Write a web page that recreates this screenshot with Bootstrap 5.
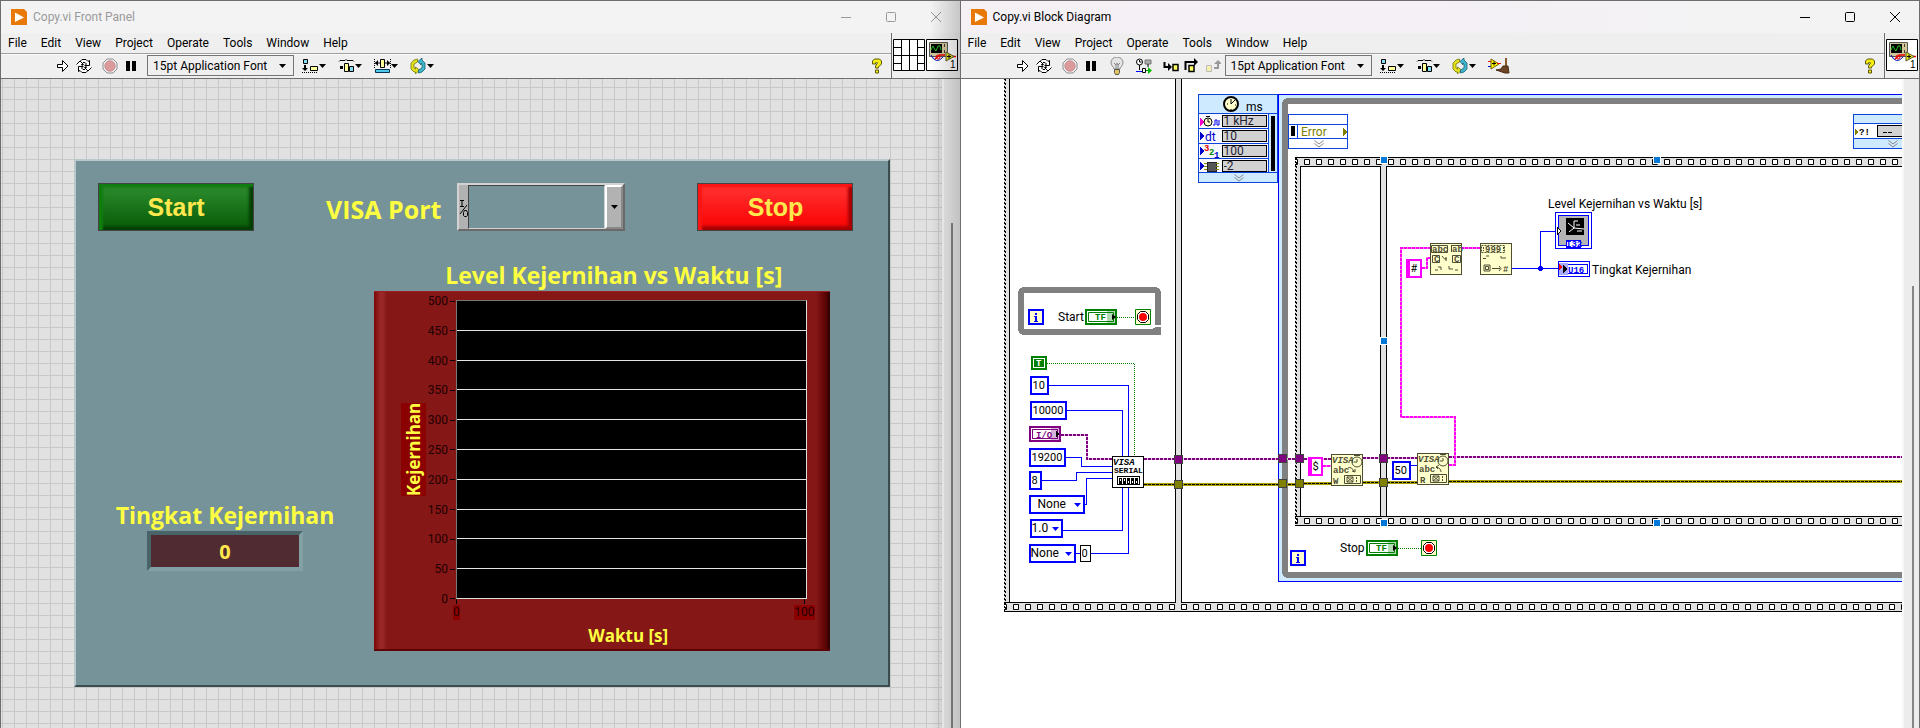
<!DOCTYPE html>
<html lang="en">
<head>
<meta charset="utf-8">
<meta name="viewport" content="width=device-width, initial-scale=1">
<title>Copy.vi</title>
<link href="https://cdn.jsdelivr.net/npm/bootstrap@5.3.0/dist/css/bootstrap.min.css" rel="stylesheet">
<style>
body { font-family: Roboto, "Open Sans", sans-serif; font-size: 12px; line-height: 16px; color: #000; background: #efefef; }
.vi-window { border-top: 1px solid #6e6e6e; border-left: 1px solid #6e6e6e; background: #efefef; flex: 1 1 0; min-width: 0; }
.vi-window.front { border-right: 1px solid #6e6e6e; }
.title-bar { height: 32px; background: #f3f3f3; padding-left: 10px; padding-right: 16px; gap: 6px; }
.front .title-bar { background: linear-gradient(90deg, #f5f0f4, #f4f0f6 50%, #f3f3f3 85%); }
.back .title-bar { color: #9a9a9a; }
.caption { width: 16px; height: 16px; padding: 0; border: 0; background: none; color: inherit; }
.captions { gap: 29px; }
.menu-bar { height: 20px; padding-left: 7px; gap: 14px; }
.menu-bar a { color: #000; text-decoration: none; }
.tool-bar { height: 26px; padding-left: 54px; padding-bottom: 1px; border-top: 1px solid #a0a0a0; border-bottom: 1px solid #6e6e6e; box-shadow: inset 0 1px #fafafa; }
.tool { border: 0; padding: 0; background: none; display: flex; height: 20px; align-items: center; }
.tool svg { display: block; }
.g5 { gap: 5px; } .g12 { gap: 12px; } .g10 { gap: 10px; }
.font-box { width: 147px; height: 21px; border: 1px solid #757575; border-radius: 0; background: #efefef url("data:image/svg+xml,%3Csvg xmlns='http://www.w3.org/2000/svg' width='7' height='4'%3E%3Cpath d='M0 0h7L3.500 4z'/%3E%3C/svg%3E") no-repeat right 7px center; appearance: none; padding: 0 18px 0 5px; line-height: 18px; color: #000; }
.icon-pane { border-left: 1px solid #6e6e6e; padding: 6px 1px 0 1px; gap: 1px; height: 46px; border-bottom: 1px solid #6e6e6e; }
.back .icon-pane { padding-right: 2px; }
.bars { min-width: 0; }

.panel-canvas { flex: 1; min-width: 0; padding: 80px 52px 40px 73px; background-color: #e1e1e1; background-image: linear-gradient(90deg, #c8c8c8 1px, transparent 1px), linear-gradient(#c8c8c8 1px, transparent 1px); background-size: 12px 12px; background-position: 1px 8px; }
.scroll-track { width: 17px; background: #ececec; padding-left: 8px; border-left: 2px solid #f8f8f8; }
.back .scroll-track { width: 18px; padding-left: 7px; padding-top: 144px; }
.front .scroll-track { padding-top: 207px; }
.scroll-thumb { width: 2px; background: #858585; }
.shade { width: 30px; background: linear-gradient(90deg, transparent, rgba(0,0,0,.18)); pointer-events: none; }
.vi-panel { background: #759398; border: 2px solid; border-color: #b9c8cb #3b4c4f #3b4c4f #b9c8cb; padding: 22px 0 34px; }
.control-row { padding: 0 34px 0 22px; }
.yellow { color: #ffff41; font-family: "Open Sans", "Noto Sans", sans-serif; font-weight: 700; }
.big-btn { width: 156px; height: 48px; border: 1px solid #444; border-radius: 0; font: bold 25px "Liberation Sans", sans-serif; color: #ffe84d; padding: 0; }
.start-btn { background: linear-gradient(#278427 20%, #0d640d 80%); box-shadow: inset 4px 3px 2px #0f7d0f, inset -4px -4px 3px #043f04; }
.stop-btn { background: linear-gradient(#ff2a2a 20%, #fb0a0a 80%); box-shadow: inset 4px 3px 2px #fa1515, inset -4px -4px 3px #a80000; }
.h-label { font-size: 23px; line-height: 32px; white-space: nowrap; }
.visa-label { font-size: 25px; padding-top: 4px; }
.visa { width: 168px; height: 48px; background: #b2b2b2; border: 2px solid; border-color: #d2d2d2 #6a6a6a #6a6a6a #d2d2d2; }
.visa select { appearance: none; border: 1px solid; border-color: #444 #d2d2d2 #d2d2d2 #444; background: #759398; border-radius: 0; flex: 1; min-width: 0; }
.visa-arrow { width: 18px; border: 2px solid; border-color: #fff #888 #888 #fff; }
.read-col { width: 298px; padding-top: 268px; }
.number-box { width: 156px; height: 40px; border: 4px solid; border-color: #486468 #83a0a5 #83a0a5 #486468; background: #502b31; color: #ffe84d; font-family: "Open Sans", "Noto Sans", sans-serif; font-weight: 700; font-size: 20px; text-align: center; padding: 0; border-radius: 0; outline: 0; }
.chart-col { flex: 1; padding-right: 58px; padding-top: 28px; }
.graph { height: 360px; padding: 8px 23px 0 27px; background: linear-gradient(90deg, #7c0505, #992727 6px, #992727 9px, #861717 13px, #861717 calc(100% - 14px), #5f0404 calc(100% - 5px), #2d0000); border-top: 1px solid #9b2020; border-bottom: 2px solid #5d0303; }
.y-title { background: #8b0000; writing-mode: vertical-rl; transform: rotate(180deg); font-size: 17px; line-height: 25px; height: 93px; text-align: center; }
.y-ticks { margin: -7px 1px -8px 0; width: 29px; }
.y-ticks div { display: flex; align-items: center; justify-content: flex-end; gap: 2px; line-height: 16px; color: #1d0000; }
.y-ticks div::after { content: ""; width: 5px; height: 1px; background: #000; }
.plot { flex: 1; height: 299px; background: #000; border: 1px solid; border-color: #777 #ddd #ddd #777; }
.plot div { flex: 1; border-bottom: 1px solid #e5e5e5; }
.plot div:last-child { border: 0; }
.x-ticks { margin: 0 -8px 0 52px; }
.x-ticks span { background: #8b0000; margin-top: 6px; line-height: 15px; position: relative; color: #1d0000; }
.x-ticks span::before { content: ""; position: absolute; left: 50%; top: -6px; height: 5px; width: 1px; background: #000; }
.x-title { font-size: 17px; line-height: 24px; margin: 4px 0 0 49px; text-align: center; }

.diagram { flex: 1; min-width: 0; background: #fff; }
.diagram > svg { width: 100%; height: 100%; position: absolute; left: 0; top: 0; }
.konst { position: absolute; height: 19px; border: 2px solid #00f; border-radius: 0; padding: 0 0 0 1px; font-size: 11px; line-height: 15px; background-color: #fff; color: #000; appearance: none; outline: 0; overflow: hidden; }
select.konst { font-size: 12px; background: #fff url("data:image/svg+xml,%3Csvg xmlns='http://www.w3.org/2000/svg' width='7' height='4'%3E%3Cpath fill='%2300f' d='M0 0h7L3.500 4z'/%3E%3C/svg%3E") no-repeat right 2px center; }
.str { border-color: #f0f; border-left-width: 4px; }
.timing { position: absolute; width: 45px; height: 12px; left: 261px; border: 1px solid #000; background: #d2d2d2; border-radius: 0; padding: 0 0 0 1px; line-height: 10px; color: #223; outline: 0; }
#k10 { left: 69px; top: 297px; width: 19px; }
#k10000 { left: 69px; top: 322px; width: 37px; }
#kbaud { left: 68px; top: 369px; width: 37px; }
#kbits { left: 68px; top: 392px; width: 13px; }
#kparity { left: 68px; top: 416px; width: 56px; padding-left: 7px; }
#kstop { left: 69px; top: 440px; width: 33px; padding-left: 0; }
#kflow { left: 68px; top: 465px; width: 47px; padding-left: 0; }
#kzero { left: 119px; top: 466px; width: 11px; height: 17px; border: 1px solid #000; }
#khash { left: 445px; top: 180px; width: 16px; }
#kdollar { left: 347px; top: 378px; width: 15px; }
#k50 { left: 431px; top: 382px; width: 19px; }
#t1 { top: 36px; } #t2 { top: 51px; } #t3 { top: 66px; } #t4 { top: 81px; }
.pix { font-family: "Liberation Mono", monospace; font-weight: 700; font-size: 9px; }
.nodetext { font-size: 12px; }
</style>
</head>
<body>
<svg width="0" height="0" class="position-absolute" aria-hidden="true">
  <defs>
    <symbol id="logo" viewBox="0 0 16 16"><path d="M0 0h13l3 3v13H0z" fill="#e87908"/><path d="M4 3.500 13 8.500 4 13z" fill="#fff"/></symbol>
    <symbol id="run" viewBox="0 0 16 16"><path d="M2.500 6.500h5v-4l5.500 5.500-5.500 5.500v-4h-5z" fill="#fff" stroke="#000"/></symbol>
    <symbol id="loop" viewBox="0 0 16 16"><path d="M.5 6.500 4 3l3.500 3.500H5.500L7 9M4 3.500 6 1.500h4l2 2 1.500-1v5H9L10.500 6 9 4.500H7M15.500 9.500 12 13 8.500 9.500h2L9 7M12 12.500l-2 2H6l-2-2-1.500 1v-5H7L5.500 10 7 11.500h2" fill="#fff" stroke="#000"/></symbol>
    <symbol id="abort" viewBox="0 0 16 16"><path d="M5 1h6l4 4v6l-4 4H5l-4-4V5z" fill="#eee" stroke="#909090"/><circle cx="8" cy="8" r="5.200" fill="#dc9a9a" stroke="#c89090"/></symbol>
    <symbol id="pause" viewBox="0 0 16 16"><path d="M3 3h4v10H3zM9 3h4v10H9z"/></symbol>
    <symbol id="drop" viewBox="0 0 7 4"><path d="M0 0h7L3.500 4z"/></symbol>
    <symbol id="align" viewBox="0 0 24 16"><path d="M1.500 1.500h4v4h-4z" fill="#7fe0f5" stroke="#000"/><path d="M8.500 8.500h7v4h-7z" fill="#ffff9a" stroke="#000"/><path d="M2 7h2v3h2l-3 3-3-3h2z"/><path d="M0 14.500h16" stroke="#000" stroke-dasharray="1 1"/><path d="M17 6h7l-3.500 4z"/></symbol>
    <symbol id="dist" viewBox="0 0 24 16"><path d="M1 3.500 2 2.500h5l1-1 1 1h6l1 1" fill="none" stroke="#000"/><path d="M6.500 5.500h4v8h-4z" fill="#ffff9a" stroke="#000"/><path d="M11.500 8.500h4v5h-4z" fill="#7fe0f5" stroke="#000"/><path d="M2 8h3v3H2z"/><path d="M17 6h7l-3.500 4z"/></symbol>
    <symbol id="size" viewBox="0 0 24 16"><path d="M1.500 11.500h14v3h-14z" fill="#4cc8e8" stroke="#035"/><path d="M6.500 1.500h4v8h-4z" fill="#ffff9a" stroke="#000"/><path d="M1 5h5M11 5h5" stroke="#000"/><path d="m1 5 3-3v6zM16 5l-3-3v6z"/><path d="M.5 1v9M16.500 1v9" stroke="#000" stroke-dasharray="1 1"/><path d="M17 6h7l-3.500 4z"/></symbol>
    <symbol id="order" viewBox="0 0 24 16"><path d="M7.500 1 4 2 1 5v6l3 3h1.500v2l4-4-4-3v2L4 10V6l3.500-2z" fill="#e2e21c" stroke="#77770a" stroke-width=".8"/><path d="m8 3.500 4-3.500v2l3 3v6l-3 3-3.500 1v-3l3.500-2V6l-1-1v2z" fill="#3fb6cc" stroke="#125f74" stroke-width=".8"/><path d="M17 6h7l-3.500 4z"/></symbol>
    <symbol id="bulb" viewBox="0 0 16 18"><path d="M5 12c0-2-3-3-3-6.500a6 5.500 0 0 1 12 0C14 9 11 10 11 12z" fill="#e4e4e4" stroke="#8a8a8a"/><path d="m5 6 2 2 1-2 1 2 2-2M7 8v4M9 8v4" fill="none" stroke="#888"/><path d="M5.500 12.500h5v3l-1 2h-3l-1-2z" fill="#e2c35c" stroke="#555"/></symbol>
    <symbol id="probe" viewBox="0 0 18 16"><path d="M10 2h6v4h-6z" fill="#aaa" stroke="#777"/><circle cx="4.500" cy="4" r="3" fill="#fff" stroke="#000"/><path d="M4.500 2v2h2M4.500 7v5M13 6v3" fill="none" stroke="#000"/><path d="M1 13.500h6" stroke="#00f"/><path d="M7.500 10.500h3v4h-3z" fill="#fff" stroke="#000"/><path d="M11 12.500h3" stroke="#090"/><path d="m13 9 4 3.500-4 3.500z" fill="#0b0"/></symbol>
    <symbol id="into" viewBox="0 0 16 16"><path d="M1.500 4v5H6" fill="none" stroke="#000" stroke-width="2"/><path d="m5 5 4 4-4 4z"/><path d="M10 6.500h5v6h-5z" fill="#ffff60" stroke="#000" stroke-width="1.500"/></symbol>
    <symbol id="over" viewBox="0 0 16 16"><path d="M1.500 12V4H11" fill="none" stroke="#000" stroke-width="2"/><path d="m10 0 4 4-4 4z"/><path d="M5 7.500h5v6H5z" fill="#ffff60" stroke="#000" stroke-width="1.500"/></symbol>
    <symbol id="out" viewBox="0 0 16 16"><path d="M9 10h4V5" fill="none" stroke="#999" stroke-width="2"/><path d="m9 6 4-4 4 4z" fill="#999"/><path d="M1.500 7.500h5v6h-5z" fill="#f3f0b0" stroke="#bbb"/></symbol>
    <symbol id="clean" viewBox="0 0 22 16"><path d="M0 3.500h3" stroke="#e00"/><path d="M0 8.500h3" stroke="#00c"/><path d="M3 1v10l8-5z" fill="#ff0" stroke="#7a5a00"/><path d="M4 5.500h4M6 3.500v4" stroke="#000"/><path d="M9 5.500h4" stroke="#f00"/><path d="M18 0v9" stroke="#8a5a28" stroke-width="2"/><path d="M15 8h5l1 7h-4l-9-3 5-1z" fill="#6b4526" stroke="#4a2e15"/></symbol>
    <symbol id="help" viewBox="0 0 12 16"><path d="M1.500 6V3l2-2h5l2 2v3l-3 3v1h-3V8l2-3-1-1-1 1v1zM4.500 12h3v3h-3z" fill="#f5ee12" stroke="#5c5708"/></symbol>
    <symbol id="vi" viewBox="0 0 32 32"><path d="M.5.5h31v31H.5z" fill="#fff" stroke="#000"/><path d="M3.500 3.500h18v14h-18z" fill="#cfc69a" stroke="#555"/><path d="M5 5h11v9H5z"/><path d="M5 11l2-4 2 4 1 1 2-5 2 0 1 4" fill="none" stroke="#1fc41f"/><path d="M18.500 5v3M18.500 11v3" stroke="#533"/><path d="M5 16q5 10 12 2" fill="none" stroke="#00a"/><path d="M9 20l5-4M13 16h6M26 17.500h4" stroke="#e00" stroke-width="1.500"/><circle cx="12" cy="18" r="2" fill="none" stroke="#e00"/><path d="M20 13v9l8-4.500z" fill="#f3ea1b" stroke="#553"/><path d="M21 17.500h4M23 15.500v4" stroke="#000"/><text x="24" y="29" font-size="10" font-family="Liberation Sans">1</text></symbol>
    <symbol id="conn" viewBox="0 0 32 32"><path d="M.5.5h31v31H.5z" fill="#fff" stroke="#000"/><path d="M8.500 0v32M16.500 0v32M24.500 0v32M0 16.500h32M0 8.500h8M0 24.500h8M24 8.500h8M24 24.500h8" stroke="#000"/></symbol>
    <pattern id="beads" width="12" height="10" patternUnits="userSpaceOnUse" x="1012" y="602"><path fill="#e1e1e1" d="M0 0h12v10H0z"/><path d="M0 .5h12M0 9.500h12" stroke="#000"/><path d="M1.500 2.500h5v5h-5z" fill="#fff" stroke="#000"/></pattern>
    <pattern id="beads2" width="12" height="10" patternUnits="userSpaceOnUse" x="1303" y="157"><path fill="#e1e1e1" d="M0 0h12v10H0z"/><path d="M0 .5h12M0 9.500h12" stroke="#000"/><path d="M1.500 2.500h5v5h-5z" fill="#fff" stroke="#000"/></pattern>
    <pattern id="beads3" width="12" height="10" patternUnits="userSpaceOnUse" x="1303" y="516"><path fill="#e1e1e1" d="M0 0h12v10H0z"/><path d="M0 .5h12M0 9.500h12" stroke="#000"/><path d="M1.500 2.500h5v5h-5z" fill="#fff" stroke="#000"/></pattern>
    <symbol id="tf" viewBox="0 0 32 16"><path d="M1 1h30v14H1z" fill="#fff" stroke="#008000" stroke-width="2"/><path d="M3.500 3.500h25v9h-25z" fill="#fff" stroke="#008000"/><text x="10" y="11" class="pix" fill="#008000">TF</text><path d="M22 2h8v12h-8z" fill="#008000" opacity=".3"/><path d="m27 5 4 3-4 3z"/></symbol>
    <symbol id="stopt" viewBox="0 0 16 16"><path d="M.5.5h15v15H.5z" fill="#ffffcc" stroke="#008000"/><path d="M5.500 2.500h5l3 3v5l-3 3h-5l-3-3v-5z" fill="#fff" stroke="#000"/><circle cx="8" cy="8" r="4" fill="#f00"/></symbol>
    <symbol id="iter" viewBox="0 0 16 16"><path d="M1 1h14v14H1z" fill="#ffffcc" stroke="#00f" stroke-width="2"/><path d="M7 4h2v2H7zM6 7h3v5h1v1H6v-1h1V8H6z" fill="#00f"/></symbol>
    <symbol id="chev" viewBox="0 0 10 8"><path d="m.5.5 4.500 3.500 4.500-3.500M.5 3.500 5 7l4.500-3.500" fill="none" stroke="#888"/></symbol>
  </defs>
</svg>
<div class="d-flex min-vh-100">

  <section class="vi-window back d-flex flex-column position-relative" aria-label="Front Panel">
    <header class="title-bar d-flex align-items-center">
      <svg width="16" height="16" class="flex-shrink-0"><use href="#logo"/></svg>
      <span class="me-auto">Copy.vi Front Panel</span>
      <div class="captions d-flex">
        <button class="caption" aria-label="Minimize"><svg width="16" height="16" class="d-block"><path d="M3 8.500h10" stroke="currentColor"/></svg></button>
        <button class="caption" aria-label="Maximize"><svg width="16" height="16" class="d-block"><rect x="3.500" y="3.500" width="9" height="9" rx="1" fill="none" stroke="currentColor"/></svg></button>
        <button class="caption" aria-label="Close"><svg width="16" height="16" class="d-block"><path d="m3 3 10 10M13 3 3 13" stroke="currentColor"/></svg></button>
      </div>
    </header>
    <div class="d-flex">
      <div class="bars flex-grow-1">
        <nav class="menu-bar d-flex align-items-center">
          <a href="#">File</a><a href="#">Edit</a><a href="#">View</a><a href="#">Project</a><a href="#">Operate</a><a href="#">Tools</a><a href="#">Window</a><a href="#">Help</a>
        </nav>
        <div class="tool-bar d-flex align-items-center">
          <div class="d-flex g10">
            <div class="d-flex g5"><button class="tool" aria-label="Run"><svg width="16" height="16"><use href="#run"/></svg></button><button class="tool" aria-label="Run continuously"><svg width="16" height="16"><use href="#loop"/></svg></button></div>
            <div class="d-flex g5"><button class="tool" aria-label="Abort"><svg width="16" height="16"><use href="#abort"/></svg></button><button class="tool" aria-label="Pause"><svg width="16" height="16"><use href="#pause"/></svg></button></div>
          </div>
          <select class="font-box ms-2 me-2" aria-label="Font"><option>15pt Application Font</option></select>
          <div class="d-flex g12">
            <button class="tool" aria-label="Align"><svg width="24" height="16"><use href="#align"/></svg></button>
            <button class="tool" aria-label="Distribute"><svg width="24" height="16"><use href="#dist"/></svg></button>
            <button class="tool" aria-label="Resize"><svg width="24" height="16"><use href="#size"/></svg></button>
            <button class="tool" aria-label="Reorder"><svg width="24" height="16"><use href="#order"/></svg></button>
          </div>
          <button class="tool ms-auto me-2" aria-label="Help"><svg width="12" height="16"><use href="#help"/></svg></button>
        </div>
      </div>
      <div class="icon-pane d-flex"><svg width="32" height="32"><use href="#conn"/></svg><svg width="32" height="32"><use href="#vi"/></svg></div>
    </div>
    <div class="d-flex flex-grow-1">
      <main class="panel-canvas">
        <div class="vi-panel">
          <div class="control-row d-flex justify-content-between align-items-center">
            <button class="big-btn start-btn">Start</button>
            <div class="d-flex align-items-center gap-3">
              <label class="yellow h-label visa-label" for="visa">VISA Port</label>
              <div class="visa d-flex">
                <svg width="9" height="44"><path d="M1 15.500h4M3 16v5M1 21.500h4M1 29 8 20M5.500 25.500h2l1 2v3l-1 1h-2l-1-1v-3z" fill="none" stroke="#000"/></svg>
                <select id="visa"><option></option></select>
                <div class="visa-arrow d-flex align-items-center justify-content-center"><svg width="7" height="4"><use href="#drop"/></svg></div>
              </div>
            </div>
            <button class="big-btn stop-btn">Stop</button>
          </div>
          <div class="d-flex">
            <div class="read-col d-flex flex-column align-items-center">
              <label class="yellow h-label" for="level">Tingkat Kejernihan</label>
              <input id="level" class="number-box" value="0" readonly>
            </div>
            <div class="chart-col">
              <div class="yellow h-label text-center ps-4">Level Kejernihan vs Waktu [s]</div>
              <div class="graph">
                <div class="d-flex align-items-center">
                  <div class="y-title yellow">Kejernihan</div>
                  <div class="y-ticks d-flex flex-column justify-content-between align-self-stretch"><div>500</div><div>450</div><div>400</div><div>350</div><div>300</div><div>250</div><div>200</div><div>150</div><div>100</div><div>50</div><div>0</div></div>
                  <div class="plot d-flex flex-column"><div></div><div></div><div></div><div></div><div></div><div></div><div></div><div></div><div></div><div></div></div>
                </div>
                <div class="x-ticks d-flex justify-content-between"><span>0</span><span>100</span></div>
                <div class="x-title yellow">Waktu [s]</div>
              </div>
            </div>
          </div>
        </div>
      </main>
      <div class="scroll-track d-flex flex-column"><div class="scroll-thumb flex-grow-1"></div></div>
    </div>
    <div class="shade position-absolute top-0 bottom-0 end-0"></div>
  </section>

  <section class="vi-window front d-flex flex-column" aria-label="Block Diagram">
    <header class="title-bar d-flex align-items-center">
      <svg width="16" height="16" class="flex-shrink-0"><use href="#logo"/></svg>
      <span class="me-auto">Copy.vi Block Diagram</span>
      <div class="captions d-flex">
        <button class="caption" aria-label="Minimize"><svg width="16" height="16" class="d-block"><path d="M3 8.500h10" stroke="currentColor"/></svg></button>
        <button class="caption" aria-label="Maximize"><svg width="16" height="16" class="d-block"><rect x="3.500" y="3.500" width="9" height="9" rx="1" fill="none" stroke="currentColor"/></svg></button>
        <button class="caption" aria-label="Close"><svg width="16" height="16" class="d-block"><path d="m3 3 10 10M13 3 3 13" stroke="currentColor"/></svg></button>
      </div>
    </header>
    <div class="d-flex">
      <div class="bars flex-grow-1">
        <nav class="menu-bar d-flex align-items-center">
          <a href="#">File</a><a href="#">Edit</a><a href="#">View</a><a href="#">Project</a><a href="#">Operate</a><a href="#">Tools</a><a href="#">Window</a><a href="#">Help</a>
        </nav>
        <div class="tool-bar d-flex align-items-center">
          <div class="d-flex g10">
            <div class="d-flex g5"><button class="tool" aria-label="Run"><svg width="16" height="16"><use href="#run"/></svg></button><button class="tool" aria-label="Run continuously"><svg width="16" height="16"><use href="#loop"/></svg></button></div>
            <div class="d-flex g5"><button class="tool" aria-label="Abort"><svg width="16" height="16"><use href="#abort"/></svg></button><button class="tool" aria-label="Pause"><svg width="16" height="16"><use href="#pause"/></svg></button></div>
            <button class="tool" aria-label="Highlight execution"><svg width="16" height="18"><use href="#bulb"/></svg></button>
            <button class="tool" aria-label="Retain wire values"><svg width="18" height="16"><use href="#probe"/></svg></button>
            <div class="d-flex g5"><button class="tool" aria-label="Step into"><svg width="16" height="16"><use href="#into"/></svg></button><button class="tool" aria-label="Step over"><svg width="16" height="16"><use href="#over"/></svg></button><button class="tool" aria-label="Step out"><svg width="16" height="16"><use href="#out"/></svg></button></div>
          </div>
          <select class="font-box ms-1 me-2" aria-label="Font"><option>15pt Application Font</option></select>
          <div class="d-flex g12">
            <button class="tool" aria-label="Align"><svg width="24" height="16"><use href="#align"/></svg></button>
            <button class="tool" aria-label="Distribute"><svg width="24" height="16"><use href="#dist"/></svg></button>
            <button class="tool" aria-label="Reorder"><svg width="24" height="16"><use href="#order"/></svg></button>
            <button class="tool" aria-label="Clean up diagram"><svg width="22" height="16"><use href="#clean"/></svg></button>
          </div>
          <button class="tool ms-auto me-2" aria-label="Help"><svg width="12" height="16"><use href="#help"/></svg></button>
        </div>
      </div>
      <div class="icon-pane d-flex"><svg width="32" height="32"><use href="#vi"/></svg></div>
    </div>
    <div class="d-flex flex-grow-1">
      <main class="diagram position-relative overflow-hidden">
        <svg aria-hidden="true"><g transform="translate(-961 -79)" shape-rendering="crispEdges" fill="none">
          <!-- outer flat sequence -->
          <path d="M1004 602h2000v10H1004z" fill="url(#beads)"/>
          <path d="M1004 70h6v532h-6z" fill="#e1e1e1"/><path d="M1004.500 70v542M1005.500 71v541" stroke="#000" stroke-dasharray="2 2"/><path d="M1009.500 70v533" stroke="#000"/>
          <path d="M1175 70h7v532h-7z" fill="#e1e1e1"/><path d="M1176 602h5v2h-5z" fill="#e1e1e1"/><path d="M1175.500 70v533M1181.500 70v533" stroke="#000"/>
          <!-- start loop -->
          <rect x="1021" y="290" width="137" height="42" rx="3" stroke="#808080" stroke-width="6"/><path d="M1154 325h8v2h-8z" fill="#fff"/><path d="M1153 328h8v7h-8z" fill="#808080"/>
          <!-- timed loop -->
          <path d="M1278.500 94.500h2000v487h-2000z" fill="#ceeaff" stroke="#0000ff"/>
          <rect x="1285" y="101" width="2000" height="474" rx="3" fill="#fff" stroke="#808080" stroke-width="6"/>
          <path d="M1198.500 94.500h79v88h-79z" fill="#ceeaff" stroke="#0c45dd"/>
          <path d="M1199 114h69v58h-69z" fill="#f8f8ff"/><path d="M1198 113.500h80M1198 128.500h70M1198 143.500h70M1198 158.500h70M1198 172.500h80M1268.500 113v60" stroke="#0c45dd"/>
          <path d="M1271 116h4v55h-4z" fill="#000"/>
          <path d="m1200 118 4 4-4 4z" fill="#f0c"/><path d="m1200 132 4 4-4 4zM1200 147l4 4-4 4zM1200 162l4 4-4 4z" fill="#00c"/>
          <!-- inner flat sequence -->
          <path d="M1295 157h2000v10H1295z" fill="url(#beads2)"/><path d="M1295 516h2000v10H1295z" fill="url(#beads3)"/>
          <path d="M1295 166h6v350h-6z" fill="#e1e1e1"/><path d="M1295.500 157v369M1296.500 158v368" stroke="#000" stroke-dasharray="2 2"/><path d="M1300.500 166v351" stroke="#000"/>
          <path d="M1380 166h7v350h-7z" fill="#e1e1e1"/><path d="M1380.500 166v351M1386.500 166v351" stroke="#000"/>
          <!-- boolean and numeric wires -->
          <path d="M1117 317.500h18M1047 363.500h87.500v93M1398 548.500h23" stroke="#008000" stroke-dasharray="1 1"/>
          <path d="M1049 385.500h79.500V456M1067 410.500h55.500V456M1066 457.500h15.500v9h31M1042 480.500h34.500v-8h36M1085 504.500h1.500v-26h26M1063 530.500h59.500V488M1076 553.500h4M1091 553.500h37.500V488M1511 268.500h47M1540.500 268v-36.500h15M1411 465.500h6" stroke="#00f"/>
          <!-- error terminals -->
          <path d="M1288.500 114.500h59v34h-59z" fill="#fff" stroke="#0c45dd"/><path d="M1289 124.500h59M1289 138.500h59M1297.500 124v15" stroke="#0c45dd"/><path d="M1291 126h4v10h-4z" fill="#000"/><path d="m1343 128 4 4-4 4z" fill="#808000"/>
          <path d="M1853.500 114.500h60v34h-60z" fill="#ceeaff" stroke="#0c45dd"/><path d="M1854 124h60v14h-60z" fill="#fff"/><path d="M1854 123.500h60M1854 138.500h60" stroke="#0c45dd"/><path d="M1877.500 125.500h40v11h-40z" fill="#d2d2d2" stroke="#000"/><path d="m1855 129 3 3-3 3z" fill="#808000"/><path d="M1883 132.500h4M1888 132.500h4" stroke="#000"/>
          <!-- VISA reference and error wires -->
          <path d="M1061 434.500h25.500v24h25M1144 458.500h187M1363 457.500h54M1449 456.500h1500" stroke="#e8c8e8" stroke-width="2"/>
          <path d="M1061 434.500h25.500v24h25M1144 458.500h187M1363 457.500h54M1449 456.500h1500" stroke="#800080" stroke-width="2" stroke-dasharray="3 1"/>
          <path d="M1144 484.500h151M1304 483.500h27M1363 482.500h54M1449 481.500h1500" stroke="#a8a000" stroke-width="3"/><path d="M1144 484.500h151M1304 483.500h27M1363 482.500h54M1449 481.500h1500" stroke="#000" stroke-dasharray="3 1"/>
          <g fill="#800080" stroke="#404040"><path d="M1174.500 455.500h8v8h-8zM1278.500 454.500h8v8h-8zM1295.500 454.500h8v8h-8zM1379.500 454.500h8v8h-8z"/></g>
          <g fill="#808000" stroke="#404040"><path d="M1174.500 480.500h8v8h-8zM1278.500 479.500h8v8h-8zM1295.500 479.500h8v8h-8zM1379.500 478.500h8v8h-8z"/></g>
          <!-- string wires -->
          <path d="M1449 465h6v-48h-54V248h29M1461 248h19M1422 268h5v-10h3M1323 466h8" stroke="#f8c" stroke-width="2"/>
          <path d="M1449 465h6v-48h-54V248h29M1461 248h19M1422 268h5v-10h3M1323 466h8" stroke="#f0f" stroke-width="2" stroke-dasharray="3 1"/>
          <!-- selection handles -->
          <path d="M1381 157h6v6h-6zM1654 157h6v6h-6zM1381 338h6v6h-6zM1381 520h6v6h-6zM1654 520h6v6h-6z" fill="#0078d7" stroke="#fff" stroke-width="2" paint-order="stroke"/>
          <path d="M1539 266h3v5h-3zM1538 267h5v3h-5z" fill="#00f"/>
          <!-- nodes -->
          <path d="M1112.500 456.500h31v31h-31z" fill="#fff" stroke="#000"/><path d="M1117.500 476.500h22v8h-22z" fill="#fff" stroke="#000"/><path d="M1119 478h3v6h-3zM1123 478h3v6h-3zM1127 478h3v6h-3zM1131 478h3v6h-3zM1135 478h3v6h-3z" fill="#000"/><path d="M1120 479h1v2h-1zM1124 479h1v2h-1zM1128 481h1v2h-1zM1132 481h1v2h-1zM1136 481h1v2h-1z" fill="#fff"/>
          <g fill="#ffffcc" stroke="#4d4d33"><path d="M1331.500 454.500h31v31h-31zM1417.500 453.500h31v31h-31zM1430.500 243.500h31v31h-31zM1480.500 243.500h31v31h-31z"/></g>
          <g stroke="#4d4d33" shape-rendering="auto">
            <circle cx="1357" cy="462" r="5" fill="#ffffcc"/><path d="M1357 459v3h-3M1354 455.500h6" /><path d="M1344.500 475.500h16v8h-16zM1347 477h6v5h-6zl6 5M1347 482l6-5M1356.500 477v2M1356.500 480v2M1348 468q4-2 6 4M1352 471l3 1v-3"/>
            <circle cx="1443" cy="461" r="5" fill="#ffffcc"/><path d="M1443 458v3h-3M1440 454.500h6"/><path d="M1430.500 474.500h16v8h-16zM1433 476h6v5h-6zl6 5M1433 481l6-5M1442.500 476v2M1442.500 479v2M1441 472q0-4-5-5M1439 465l-3 2 2 2"/>
            <path d="M1431.500 245.500h16v7h-16zM1451 245.500h10M1451.500 245v7M1432.500 255.500h7v7h-7zM1452.500 255.500h8v7h-8zM1442 256q2 4 5 3M1446 257v4M1435 270h3M1438 267h3v3M1449 266v3h4M1455 270h3" />
            <path d="M1481.500 245.500h23v7h-23zM1483.500 247v4M1503.500 247v4" stroke-dasharray="2 1"/><path d="M1485.500 266.500h3v3h-3zM1484 265h6v6h-6zM1492 268.500h8M1499 266l2 2.500-2 2.500M1483 258.500h3M1486 256h3M1501 256v2h5"/>
          </g>
          <path d="M1555.500 212.500h36v36h-36z" fill="#fff" stroke="#00f"/><path d="M1558.500 215.500h30v30h-30z" fill="#b5b5b5" stroke="#00f"/><path d="M1566 218h18v17h-18z" fill="#000"/><path d="M1568 223l6 5 10 1M1574 228l-5 4M1574 228v-7h4M1576 225h4M1577 231h5" stroke="#fff" shape-rendering="auto"/><path d="m1557 227 4 4-4 4z" fill="#fff" stroke="#000"/><path d="M1566.500 240.500h14v7h-14z" fill="#fff" stroke="#00f"/>
          <path d="M1558.500 261.500h31v15h-31z" fill="#fff" stroke="#00f"/><path d="M1561.500 264.500h26v9h-26z" stroke="#00f"/><path d="M1559 263h9v12h-9z" fill="#a8a8ff"/><path d="m1559 264 3 3-3 3z" fill="#f00"/><path d="m1563 265 4 4-4 4z" fill="#000"/>
          <path d="M1030 427h30v14h-30z" fill="#fff" stroke="#800080" stroke-width="2"/><path d="M1032.500 429.500h25v9h-25z" stroke="#800080"/><path d="M1051 428h8v12h-8z" fill="#800080" opacity=".3"/><path d="m1056 431 4 3-4 3z" fill="#000"/>
          <path d="M1032 357h14v12h-14z" fill="#008000" stroke="#008000" stroke-width="2"/><path d="M1033.500 358.500h11v9h-11z" stroke="#fff"/>
          <!-- clock, timing source, chip -->
          <g shape-rendering="auto"><circle cx="1231" cy="104" r="7" fill="#ffffcc" stroke="#000" stroke-width="2"/><path d="M1231 99v5l4-4M1227 104h1M1235 105h1M1231 109v1" stroke="#000"/><circle cx="1208" cy="122" r="4" fill="#ffffcc" stroke="#000"/><path d="M1208 119v3h2M1206 116.500h4" stroke="#000"/><path d="M1213 125h2v-5h2v5h2v-5" stroke="#00f"/></g>
          <path d="M1207 162h9v9h-9z" fill="#555" stroke="#222"/><path d="M1204 163.500h3M1204 166.500h3M1204 169.500h3M1216 163.500h3M1216 166.500h3M1216 169.500h3" stroke="#880"/>
        </g>
        <g transform="translate(-961 -79)">
          <use href="#iter" x="1028" y="309" width="16" height="16"/><use href="#iter" x="1290" y="550" width="16" height="16"/>
          <use href="#tf" x="1085" y="309" width="32" height="16"/><use href="#tf" x="1366" y="540" width="32" height="16"/>
          <use href="#stopt" x="1135" y="309" width="16" height="16"/><use href="#stopt" x="1421" y="540" width="16" height="16"/>
          <use href="#chev" x="1234" y="174" width="10" height="8"/><use href="#chev" x="1314" y="140" width="10" height="8"/><use href="#chev" x="1888" y="140" width="10" height="8"/>
          <g class="nodetext">
            <text x="1058" y="321">Start</text><text x="1340" y="552">Stop</text>
            <text x="1548" y="208">Level Kejernihan vs Waktu [s]</text><text x="1592" y="274">Tingkat Kejernihan</text>
            <text x="1301" y="136" fill="#808000">Error</text><text x="1246" y="111">ms</text><text x="1205" y="141" fill="#00c">dt</text>
          </g>
          <g class="pix">
            <text x="1204" y="151" fill="#d00">3</text><text x="1209" y="155" fill="#080">2</text><text x="1214" y="158" fill="#00c">1</text>
            <text x="1859" y="135">?!</text><text x="1036" y="438" fill="#800080">I/O</text><text x="1036" y="366" fill="#fff">T</text>
            <text x="1568" y="273" fill="#00f">U16</text><text x="1566" y="247" fill="#00f">I32</text>
            <text x="1113" y="465" font-style="italic">VISA</text><text x="1114" y="473" font-size="8">SERIAL</text>
            <g fill="#4d4d33"><text x="1332" y="463" font-style="italic">VISA</text><text x="1333" y="473">abc</text><text x="1333" y="484">W</text>
            <text x="1418" y="462" font-style="italic">VISA</text><text x="1419" y="472">abc</text><text x="1420" y="483">R</text>
            <text x="1432" y="252">abc</text><text x="1452" y="252">ab</text><text x="1434" y="262">C</text><text x="1454" y="262">C</text><text x="1485" y="252">999</text><text x="1503" y="272">#</text></g>
          </g>
          <path d="m1031 504 4-3v6zM1040 504l-4-3v6z" fill="#00f"/>
        </g></svg>
        <input class="konst" id="k10" value="10" aria-label="Timeout"><input class="konst" id="k10000" value="10000" aria-label="Timeout ms">
        <input class="konst" id="kbaud" value="19200" aria-label="Baud rate"><input class="konst" id="kbits" value="8" aria-label="Data bits">
        <select class="konst" id="kparity" aria-label="Parity"><option>None</option></select>
        <select class="konst" id="kstop" aria-label="Stop bits"><option>1.0</option></select>
        <select class="konst" id="kflow" aria-label="Flow control"><option>None</option></select>
        <input class="konst" id="kzero" value="0" aria-label="Zero">
        <input class="konst str" id="khash" value="#" aria-label="Delimiter"><input class="konst str" id="kdollar" value="$" aria-label="Command"><input class="konst" id="k50" value="50" aria-label="Byte count">
        <input class="timing" id="t1" value="1 kHz" aria-label="Source"><input class="timing" id="t2" value="10" aria-label="Period"><input class="timing" id="t3" value="100" aria-label="Priority"><input class="timing" id="t4" value="-2" aria-label="Processor">
      </main>
      <div class="scroll-track d-flex flex-column"><div class="scroll-thumb flex-grow-1"></div></div>
    </div>
  </section>
</div>
<script src="https://cdn.jsdelivr.net/npm/bootstrap@5.3.0/dist/js/bootstrap.bundle.min.js"></script>
</body>
</html>
